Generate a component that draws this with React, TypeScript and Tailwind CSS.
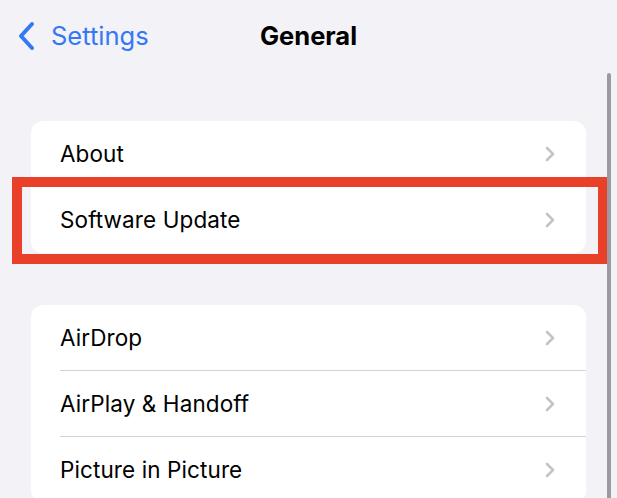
import React from "react";

const groups = [
  ["About", "Software Update"],
  ["AirDrop", "AirPlay & Handoff", "Picture in Picture"],
];

function Chevron() {
  return (
    <svg width="10" height="16" viewBox="0 0 10 16" fill="none">
      <path d="M2 2l6 6-6 6" stroke="#c4c4c7" strokeWidth="2.6" strokeLinecap="round" strokeLinejoin="round" />
    </svg>
  );
}

function Row({ label, last }: { label: string; last: boolean }) {
  return (
    <div className="flex h-[66px] items-center pl-[29px]">
      <div className={`flex h-full flex-1 items-center justify-between pr-[31px] ${last ? "" : "border-b border-[#d1d1d6]"}`}>
        <span className="text-[22.5px] tracking-[0.1px] text-black">{label}</span>
        <Chevron />
      </div>
    </div>
  );
}

export default function App() {
  return (
    <div className="relative h-[498px] w-[617px] overflow-hidden bg-[#f2f2f7]" style={{ fontFamily: "Inter, 'Noto Sans', sans-serif" }}>
      {/* Nav */}
      <div className="grid h-[72px] grid-cols-[1fr_auto_1fr] items-center px-[18px]">
        <div className="flex items-center gap-[16px] text-[#3478f6]">
          <svg width="17" height="30" viewBox="0 0 17 30" fill="none">
            <path d="M14 3L3 15 14 27" stroke="#3478f6" strokeWidth="4" strokeLinecap="round" strokeLinejoin="round" />
          </svg>
          <span className="text-[25.5px] leading-none">Settings</span>
        </div>
        <div className="text-[25.5px] font-bold leading-none text-black">General</div>
        <div />
      </div>

      <div className="flex flex-col gap-[52px] px-[31px] pt-[49px]">
        {groups.map((g, i) => (
          <div key={i} className="w-[555px] overflow-hidden rounded-[12px] bg-white">
            {g.map((label, j) => (
              <Row key={label} label={label} last={i === 0 && j === g.length - 1} />
            ))}
          </div>
        ))}
      </div>

      {/* highlight box */}
      <div className="absolute left-[12px] top-[177px] h-[87px] w-[596px] border-[10px] border-[#e9402a]" />

      {/* scrollbar */}
      <div className="absolute right-[6px] top-[73px] h-[440px] w-[4px] rounded-full bg-[#9b9b9f]" />
    </div>
  );
}
